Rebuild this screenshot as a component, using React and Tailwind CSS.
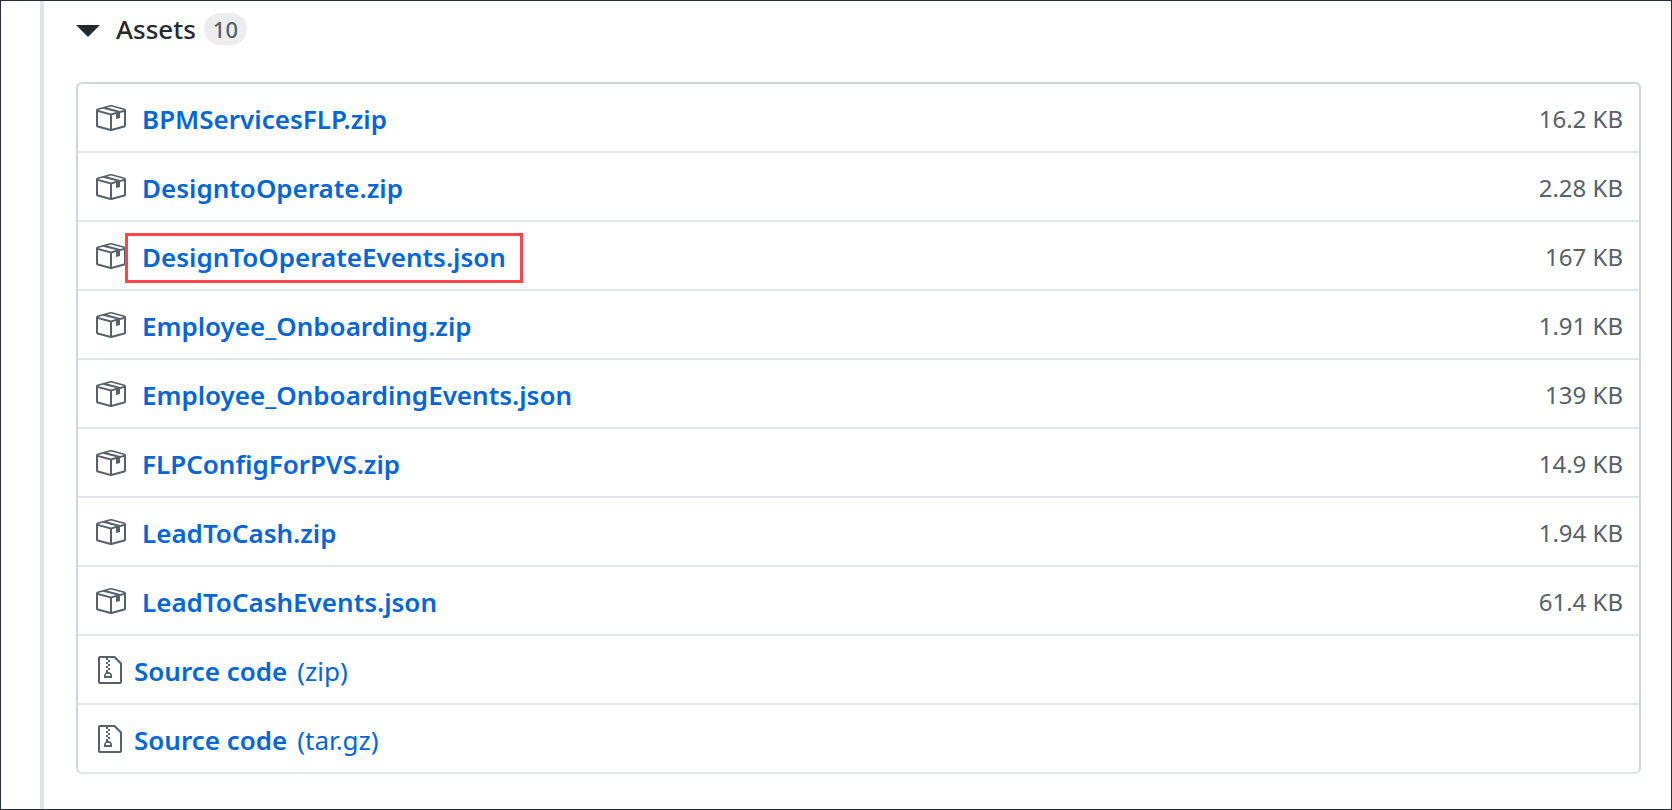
const assets = [
  { name: 'BPMServicesFLP.zip', size: '16.2 KB' },
  { name: 'DesigntoOperate.zip', size: '2.28 KB' },
  { name: 'DesignToOperateEvents.json', size: '167 KB', marked: true },
  { name: 'Employee_Onboarding.zip', size: '1.91 KB' },
  { name: 'Employee_OnboardingEvents.json', size: '139 KB' },
  { name: 'FLPConfigForPVS.zip', size: '14.9 KB' },
  { name: 'LeadToCash.zip', size: '1.94 KB' },
  { name: 'LeadToCashEvents.json', size: '61.4 KB' },
];

const sources = ['(zip)', '(tar.gz)'];

function PackageIcon() {
  return (
    <svg aria-hidden="true" viewBox="0 0 16 16" className="h-8 w-8 shrink-0 fill-[#586069]">
      <path
        fillRule="evenodd"
        d="M1 4.27v7.47c0 .45.3.84.75.97l6.5 1.73c.16.05.34.05.5 0l6.5-1.73c.45-.13.75-.52.75-.97V4.27c0-.45-.3-.84-.75-.97l-6.5-1.74a1.4 1.4 0 0 0-.5 0L1.75 3.3c-.45.13-.75.52-.75.97zm7 9.09l-6-1.59V5l6 1.61v6.75zM2 4l2.5-.67L11 5.06l-2.5.67L2 4zm13 7.77l-6 1.59V6.61l2-.55V8.5l2-.53V5.53L15 5v6.77zm-2-7.24L6.5 2.8l2-.53L15 4l-2 .53z"
      />
    </svg>
  );
}

function ZipIcon() {
  return (
    <svg aria-hidden="true" viewBox="0 0 12 16" className="h-8 w-6 shrink-0 fill-[#586069]">
      <path
        fillRule="evenodd"
        d="M8.5 1H1a1 1 0 0 0-1 1v12a1 1 0 0 0 1 1h10a1 1 0 0 0 1-1V4.5L8.5 1zM11 14H1V2h3v1h1V2h3l3 3v9zM5 4V3h1v1H5zM4 4h1v1H4V4zm1 2V5h1v1H5zM4 6h1v1H4V6zm1 2V7h1v1H5zM4 9.28A2 2 0 0 0 3 11v1h4v-1a2 2 0 0 0-2-2V8H4v1.28zM6 10v1H4v-1h2z"
      />
    </svg>
  );
}

export default function App() {
  return (
    <div className="flex min-h-screen border border-[#252e42] bg-white pl-[39px] font-['Noto_Sans','Open_Sans',sans-serif] text-[#24292e]">
      <main className="flex-1 border-l-4 border-[#e1e4e8] pr-[30px] pl-8">
        <button
          type="button"
          aria-expanded="true"
          className="flex h-14 items-center text-[26px] leading-8 font-medium"
        >
          <svg aria-hidden="true" viewBox="0 0 24 12" className="mt-1 mr-4 h-3 w-6 fill-[#24292e]">
            <path d="M0 0H24L12 12Z" />
          </svg>
          Assets
          <span className="ml-2 rounded-full bg-[#ededed] px-[9px] text-[22px] leading-8 text-[#586069]">
            10
          </span>
        </button>
        <ul className="mt-[25px] rounded-md border-2 border-[#d1d5da] border-b-[#e1e4e8] text-[26px] leading-9 text-[#0366d6]">
          {assets.map((asset) => (
            <li
              key={asset.name}
              className="flex h-[69px] items-center justify-between border-b-2 border-[#e1e4e8] px-4"
            >
              <span className="flex items-center gap-4">
                <PackageIcon />
                <a href="#" className="relative mt-[2px] font-semibold">
                  {asset.name}
                  {asset.marked && (
                    <span className="absolute -inset-x-[17px] -top-[6px] -bottom-2 border-3 border-[#fb4548]" />
                  )}
                </a>
              </span>
              <span className="mt-[2px] text-2xl text-[#586069]">{asset.size}</span>
            </li>
          ))}
          {sources.map((kind) => (
            <li
              key={kind}
              className="flex h-[69px] items-center border-b-2 border-[#e1e4e8] px-5 last:h-[67px] last:border-b-0"
            >
              <a href="#" className="flex items-center gap-3">
                <ZipIcon />
                <span className="mt-[2px] flex items-baseline gap-[10px]">
                  <span className="font-semibold">Source code</span>
                  <span>{kind}</span>
                </span>
              </a>
            </li>
          ))}
        </ul>
      </main>
    </div>
  );
}
